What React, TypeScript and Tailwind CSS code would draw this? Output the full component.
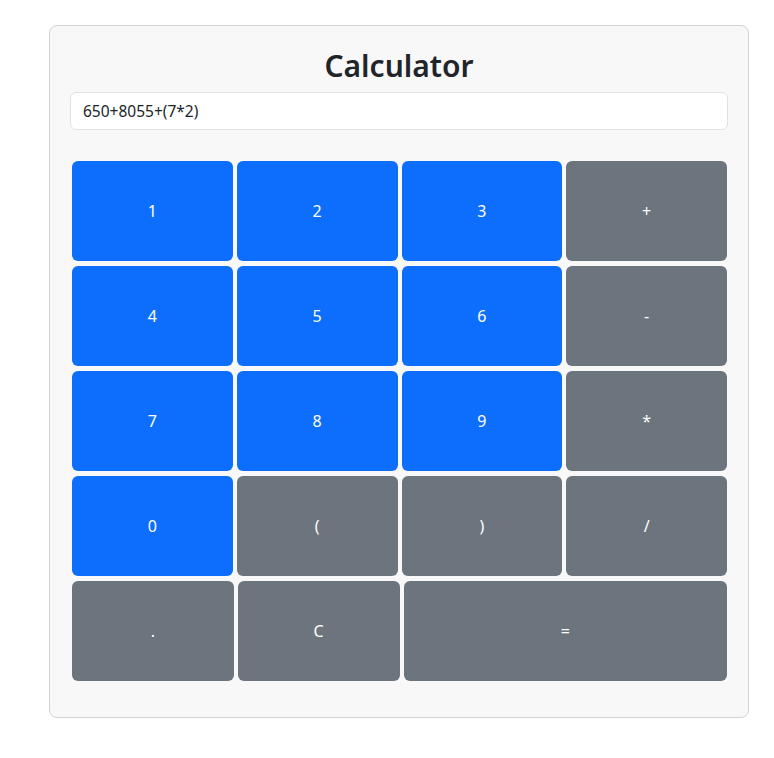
import React, { useState } from 'react';

const ROWS: string[][] = [
  ['1', '2', '3', '+'],
  ['4', '5', '6', '-'],
  ['7', '8', '9', '*'],
  ['0', '(', ')', '/'],
];

const isDigit = (k: string) => /[0-9]/.test(k);

const Key: React.FC<{ label: string; onPress: (k: string) => void; wide?: boolean }> = ({ label, onPress, wide }) => (
  <button
    onClick={() => onPress(label)}
    className={`${wide ? 'flex-[2]' : 'flex-1'} h-[100px] rounded-[6px] text-white text-[16px] ${
      isDigit(label) ? 'bg-[#0d6efd]' : 'bg-[#6c757d]'
    }`}
  >
    {label}
  </button>
);

const App: React.FC = () => {
  const [expr, setExpr] = useState('650+8055+(7*2)');

  const press = (k: string) => {
    if (k === 'C') return setExpr('');
    if (k === '=') {
      try {
        // eslint-disable-next-line no-new-func
        setExpr(String(Function(`return (${expr})`)()));
      } catch {
        setExpr('Error');
      }
      return;
    }
    setExpr(prev => prev + k);
  };

  return (
    <div className="min-h-screen bg-white font-['Noto_Sans',sans-serif] text-[#212529] pt-[25px] pl-[49px]">
      <div className="w-[700px] bg-[#f8f8f8] border border-[#d3d4d5] rounded-[8px] px-[20px] pt-[21px] pb-[36px]">
        <h2 className="text-center text-[30px] leading-[38px] font-semibold">Calculator</h2>

        <input
          className="mt-[7px] w-full h-[38px] bg-white border border-[#dee2e6] rounded-[6px] px-[12px] text-[15.5px] outline-none"
          value={expr}
          onChange={e => setExpr(e.target.value)}
        />

        <div className="mt-[31px] px-[2px] pr-[1px] flex flex-col gap-[5px]">
          {ROWS.map((row, i) => (
            <div key={i} className="flex gap-[4px]">
              {row.map(k => (
                <Key key={k} label={k} onPress={press} />
              ))}
            </div>
          ))}
          <div className="flex gap-[4px]">
            <Key label="." onPress={press} />
            <Key label="C" onPress={press} />
            <Key label="=" onPress={press} wide />
          </div>
        </div>
      </div>
    </div>
  );
};

export default App;
